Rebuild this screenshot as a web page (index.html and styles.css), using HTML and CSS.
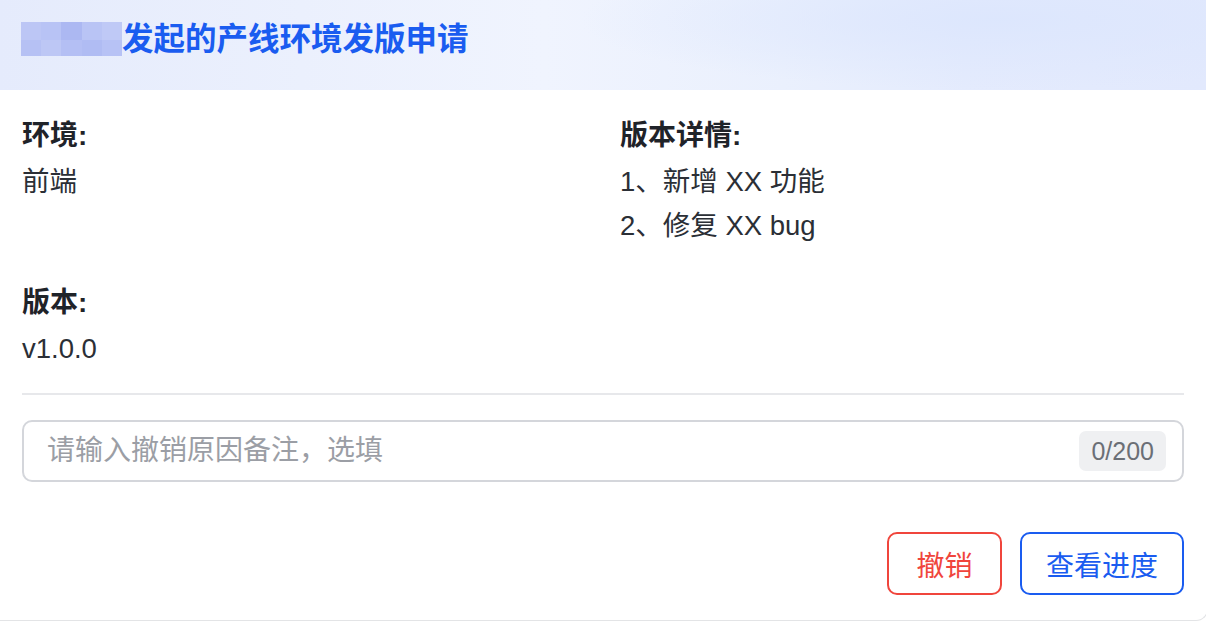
FILE: index.html
```html
<!DOCTYPE html>
<html>
	<head>
		<meta name="viewport" content="width=device-width,initial-scale=1.0">
		<title>产线环境发版申请</title>
		<link rel="stylesheet" href="styles.css">
	</head>
	<body>
		<div class="release-card">
			<div class="card-header">
				<!-- name is pixelated in the original -->
				<div class="mosaic">
					<span></span><span></span><span></span><span></span><span></span>
					<span></span><span></span><span></span><span></span><span></span>
				</div>
				<h1 class="card-title">发起的产线环境发版申请</h1>
			</div>

			<div class="card-body">
				<div class="field-grid">
					<div class="field">
						<div class="field-label">环境:</div>
						<div class="field-value">前端</div>
					</div>
					<div class="field">
						<div class="field-label">版本详情:</div>
						<div class="field-value">1、新增 XX 功能</div>
						<div class="field-value">2、修复 XX bug</div>
					</div>
					<div class="field">
						<div class="field-label">版本:</div>
						<div class="field-value">v1.0.0</div>
					</div>
				</div>

				<div class="divider"></div>

				<div class="remark">
					<input class="remark-input" maxlength="200" placeholder="请输入撤销原因备注，选填" />
					<span class="remark-count">0/200</span>
				</div>

				<div class="actions">
					<button class="btn btn-danger">撤销</button>
					<button class="btn btn-primary">查看进度</button>
				</div>
			</div>
		</div>
	</body>
</html>
```

FILE: styles.css
```css
body {
	margin: 0;
	overflow: hidden;
	background: #fff;
	font-family: "Liberation Sans", "Noto Sans CJK SC", sans-serif;
	color: #1f2329;
}

.release-card {
	width: 1208px;
	box-sizing: border-box;
	border-right: 1px solid #e3e4e6;
	border-bottom: 1px solid #e3e4e6;
	border-radius: 0 0 12px 0;
	overflow: hidden;
}

/* header with the soft blue wash */
.card-header {
	height: 90px;
	box-sizing: border-box;
	padding: 22px 20px 0 21px;
	display: flex;
	align-items: flex-start;
	background:
		radial-gradient(ellipse 420px 70px at 1000px 20px, rgba(220, 230, 253, 0.9), rgba(220, 230, 253, 0)),
		linear-gradient(90deg, #e5ebfc 0%, #ebf0fd 25%, #f0f4fe 45%, #eaf0fd 65%, #e4ebfd 80%, #e2e9fd 100%);
}

.mosaic {
	width: 101px;
	height: 34px;
	display: grid;
	grid-template-columns: repeat(5, 1fr);
	grid-template-rows: 18px 16px;
}

.mosaic span:nth-child(1) { background: #bcc6f5; }
.mosaic span:nth-child(2) { background: #b8c3f5; }
.mosaic span:nth-child(3) { background: #acb8f2; }
.mosaic span:nth-child(4) { background: #b9c4f5; }
.mosaic span:nth-child(5) { background: #bfc9f6; }
.mosaic span:nth-child(6) { background: #b6c1f4; }
.mosaic span:nth-child(7) { background: #bdc7f5; }
.mosaic span:nth-child(8) { background: #b4bff4; }
.mosaic span:nth-child(9) { background: #b0bcf3; }
.mosaic span:nth-child(10) { background: #b7c2f5; }

.card-title {
	margin: 0;
	font-size: 31.5px;
	line-height: 34px;
	font-weight: 700;
	color: #1a5cf0;
}

.card-body {
	padding: 24px 23px 25px 22px;
}

.field-grid {
	display: grid;
	grid-template-columns: 1fr 1fr;
	column-gap: 34px;
	row-gap: 35px;
}

.field-label {
	font-size: 28px;
	line-height: 44px;
	font-weight: 700;
	color: #1f2329;
}

.field-value {
	font-size: 27.5px;
	line-height: 44px;
	color: #2b2f36;
	padding-top: 2px;
	margin-bottom: -2px;
}

.divider {
	height: 2px;
	background: #e7e8eb;
	margin: 24px 0 25px;
}

.remark {
	height: 62px;
	box-sizing: border-box;
	border: 2px solid #d4d6db;
	border-radius: 10px;
	display: flex;
	align-items: center;
	padding: 0 16px 0 23px;
}

.remark-input {
	flex-grow: 1;
	border: none;
	outline: none;
	padding: 0;
	background: transparent;
	font-family: inherit;
	font-size: 28px;
	color: #1f2329;
}

.remark-input::placeholder {
	color: #9b9ea5;
}

.remark-count {
	background: #eff0f2;
	color: #6b6f76;
	font-size: 25px;
	line-height: 40px;
	padding: 0 12px;
	border-radius: 7px;
}

.actions {
	display: flex;
	justify-content: flex-end;
	gap: 18px;
	margin-top: 50px;
}

.btn {
	height: 63px;
	min-width: 115px;
	box-sizing: border-box;
	padding: 0 24px;
	background: #fff;
	border: 2px solid;
	border-radius: 10px;
	font-family: inherit;
	font-size: 28px;
	cursor: pointer;
}

.btn-danger {
	color: #f0453c;
	border-color: #f0453c;
}

.btn-primary {
	color: #1a5cf0;
	border-color: #1a5cf0;
}
```
